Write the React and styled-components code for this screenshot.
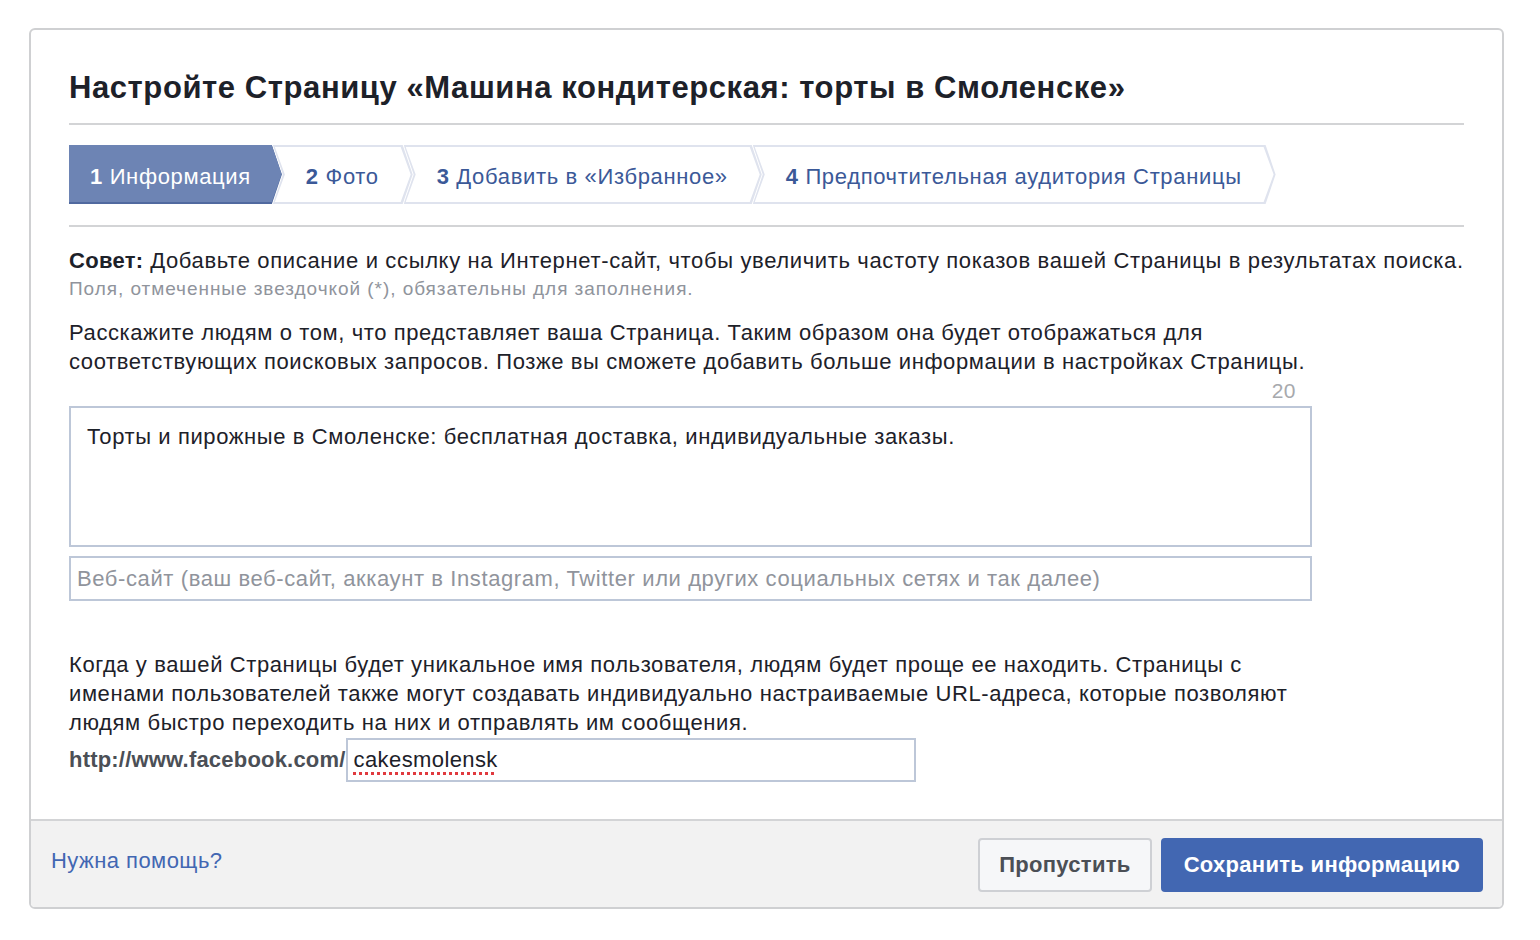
import React from "react"
import styled, { createGlobalStyle } from "styled-components"

const GlobalStyle = createGlobalStyle`
    body {
        margin: 0;
        background: #fff;
        font-family: "Liberation Sans", Arial, Helvetica, sans-serif;
        color: #1d2129;
    }
`

const steps = [
    { num: 1, label: "Информация", active: true },
    { num: 2, label: "Фото" },
    { num: 3, label: "Добавить в «Избранное»" },
    { num: 4, label: "Предпочтительная аудитория Страницы" },
]

export default function App() {
    return (
        <>
            <GlobalStyle />
            <Card>
                <Body>
                    <Title>Настройте Страницу «Машина кондитерская: торты в Смоленске»</Title>
                    <Rule />
                    <Steps>
                        {steps.map((step, i) => (
                            <Step key={step.num} active={step.active} first={i === 0}>
                                <StepLabel><b>{step.num}</b> {step.label}</StepLabel>
                            </Step>
                        ))}
                    </Steps>
                    <Rule />
                    <Tip><b>Совет:</b> Добавьте описание и ссылку на Интернет-сайт, чтобы увеличить частоту показов вашей Страницы в результатах поиска.</Tip>
                    <Hint>Поля, отмеченные звездочкой (*), обязательны для заполнения.</Hint>
                    <Paragraph>
                        Расскажите людям о том, что представляет ваша Страница. Таким образом она будет отображаться для<br />
                        соответствующих поисковых запросов. Позже вы сможете добавить больше информации в настройках Страницы.
                    </Paragraph>
                    <Field>
                        <Counter>20</Counter>
                        <TextArea defaultValue="Торты и пирожные в Смоленске: бесплатная доставка, индивидуальные заказы." />
                        <TextInput placeholder="Веб-сайт (ваш веб-сайт, аккаунт в Instagram, Twitter или других социальных сетях и так далее)" />
                    </Field>
                    <Paragraph spaced>
                        Когда у вашей Страницы будет уникальное имя пользователя, людям будет проще ее находить. Страницы с<br />
                        именами пользователей также могут создавать индивидуально настраиваемые URL-адреса, которые позволяют<br />
                        людям быстро переходить на них и отправлять им сообщения.
                    </Paragraph>
                    <UrlRow>
                        <UrlPrefix>http://www.facebook.com/</UrlPrefix>
                        <UrlBox>
                            <Misspelled>cakesmolensk</Misspelled>
                        </UrlBox>
                    </UrlRow>
                </Body>
                <Footer>
                    <HelpLink href="#">Нужна помощь?</HelpLink>
                    <Actions>
                        <Button>Пропустить</Button>
                        <Button primary>Сохранить информацию</Button>
                    </Actions>
                </Footer>
            </Card>
        </>
    )
}

const Card = styled.div`
    margin: 28px 0 0 29px;
    width: 1475px;
    box-sizing: border-box;
    border: 2px solid #cfd0d2;
    border-radius: 6px;
    overflow: hidden;
    background: #fff;
`

const Body = styled.div`
    padding: 40px 38px 37px 38px;
`

const Title = styled.h1`
    margin: 0;
    font-size: 31px;
    line-height: 36px;
    font-weight: bold;
    color: #1d2129;
    letter-spacing: 0.58px;
`

const Rule = styled.div`
    height: 2px;
    background: #d3d4d6;
    margin: 17px 0 20px;

    & + & {
        margin-top: 0;
    }
`

const Steps = styled.div`
    display: flex;
    height: 59px;
    margin-bottom: 21px;
`

const Step = styled.div`
    position: relative;
    display: flex;
    align-items: center;
    height: 100%;
    box-sizing: border-box;
    padding: 5px ${p => p.first ? '31px' : '34px'} 0 ${p => p.first ? '21px' : '33px'};
    margin-left: ${p => p.first ? '0' : '-9px'};
    color: ${p => p.active ? '#fff' : '#3b5998'};
    background: ${p => p.active ? '#50699f' : '#dfe3ee'};
    clip-path: ${p => p.first
        ? 'polygon(0 0, calc(100% - 10px) 0, 100% 50%, calc(100% - 10px) 100%, 0 100%)'
        : 'polygon(0 0, calc(100% - 10px) 0, 100% 50%, calc(100% - 10px) 100%, 0 100%, 10px 50%)'};

    &::before {
        content: '';
        position: absolute;
        inset: ${p => p.active ? '0 0 2px 0' : '2px'};
        background: ${p => p.active ? '#6d84b4' : '#fff'};
        clip-path: inherit;
    }
`

const StepLabel = styled.span`
    position: relative;
    font-size: 22px;
    letter-spacing: 0.65px;
    white-space: nowrap;

    b {
        font-weight: bold;
    }
`

const Tip = styled.p`
    margin: 0;
    font-size: 22px;
    line-height: 27px;
    letter-spacing: 0.65px;
    color: #1d2129;

    b {
        font-weight: bold;
        letter-spacing: 0.3px;
    }
`

const Hint = styled.p`
    margin: 3px 0 0;
    font-size: 19px;
    line-height: 24px;
    letter-spacing: 0.95px;
    color: #90949c;
`

const Paragraph = styled.p`
    margin: ${p => p.spaced ? '49px 0 0' : '17px 0 0'};
    font-size: 22px;
    line-height: 29px;
    letter-spacing: 0.6px;
    color: #1d2129;
`

const Field = styled.div`
    width: 1243px;
    display: flex;
    flex-direction: column;
    gap: 9px;
`

const Counter = styled.div`
    align-self: flex-end;
    margin: 3px 16px -6px 0;
    font-size: 21px;
    line-height: 24px;
    letter-spacing: 0.5px;
    color: #a7a9ad;
`

const TextArea = styled.textarea`
    display: block;
    width: 100%;
    height: 141px;
    box-sizing: border-box;
    border: 2px solid #bdc7d8;
    padding: 16px 16px;
    font-family: inherit;
    font-size: 22px;
    line-height: 26px;
    letter-spacing: 0.6px;
    color: #1d2129;
    resize: none;
    outline: none;
`

const TextInput = styled.input`
    display: block;
    width: 100%;
    height: 45px;
    box-sizing: border-box;
    border: 2px solid #bdc7d8;
    padding: 0 6px;
    font-family: inherit;
    font-size: 22px;
    letter-spacing: 0.6px;
    color: #1d2129;
    outline: none;

    &::placeholder {
        color: #90949c;
    }
`

const UrlRow = styled.div`
    display: flex;
    align-items: center;
    margin-top: 1px;
`

const UrlPrefix = styled.span`
    font-size: 22px;
    font-weight: bold;
    color: #4b4f56;
    letter-spacing: 0.2px;
`

const UrlBox = styled.div`
    width: 570px;
    height: 44px;
    box-sizing: border-box;
    border: 2px solid #bdc7d8;
    display: flex;
    align-items: center;
    padding: 0 6px;
    font-size: 22px;
    letter-spacing: 0.4px;
    color: #1d2129;
`

const Misspelled = styled.span`
    text-decoration: underline dotted #e0393e;
    text-decoration-thickness: 3px;
    text-underline-offset: 5px;
`

const Footer = styled.div`
    display: flex;
    align-items: center;
    justify-content: space-between;
    background: #f2f2f2;
    border-top: 2px solid #d3d4d6;
    padding: 17px 19px 15px 20px;
`

const HelpLink = styled.a`
    font-size: 22px;
    letter-spacing: 0.45px;
    color: #4267b2;
    text-decoration: none;
    margin-top: -8px;
`

const Actions = styled.div`
    display: flex;
    gap: 9px;
`

const Button = styled.button`
    height: 54px;
    box-sizing: border-box;
    padding: 0 ${p => p.primary ? '21px' : '19px'};
    border-radius: 4px;
    border: 2px solid ${p => p.primary ? '#4267b2' : '#ced0d4'};
    background: ${p => p.primary ? '#4267b2' : '#f6f7f9'};
    color: ${p => p.primary ? '#fff' : '#4b4f56'};
    font-family: inherit;
    font-size: 22px;
    letter-spacing: 0.3px;
    font-weight: bold;
    cursor: pointer;
`
